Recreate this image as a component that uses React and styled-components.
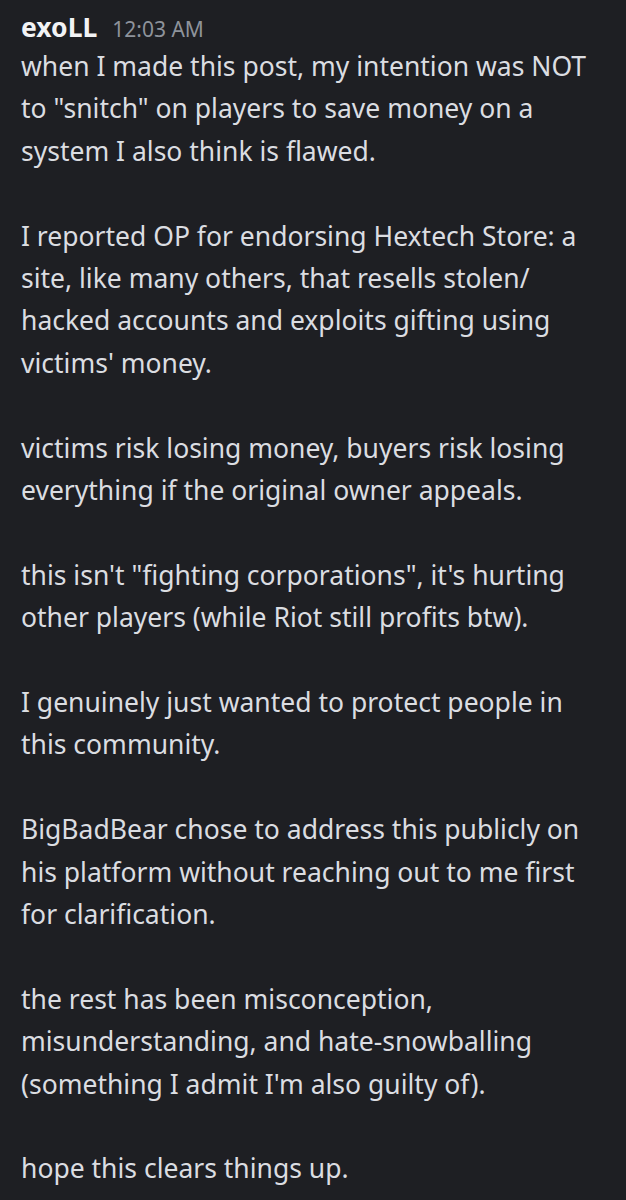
import React from 'react';
import styled, { createGlobalStyle } from 'styled-components';

const GlobalStyle = createGlobalStyle`
  html, body {
    margin: 0;
    padding: 0;
    background: #1e1f23;
  }
`;

const Page = styled.div`
  width: 626px;
  height: 1200px;
  overflow: hidden;
  background: #1e1f23;
  padding: 10px 0 0 21px;
  box-sizing: border-box;
  font-family: "Noto Sans", "Open Sans", sans-serif;
`;

const Header = styled.div`
  display: flex;
  align-items: baseline;
  gap: 15px;
  height: 35px;
  line-height: 35px;
`;

const Username = styled.span`
  color: #f2f3f5;
  font-size: 26.5px;
  font-weight: 700;
`;

const Timestamp = styled.span`
  color: #8e939b;
  font-size: 21px;
`;

const Body = styled.div`
  display: flex;
  flex-direction: column;
  gap: 42.4px;
  color: #dbdde1;
  font-size: 26.5px;
  line-height: 42.4px;
`;

const Paragraph = styled.div`
  display: flex;
  flex-direction: column;
`;

const Line = styled.span`
  white-space: nowrap;
`;

const paragraphs = [
  [
    'when I made this post, my intention was NOT',
    'to "snitch" on players to save money on a',
    'system I also think is flawed.',
  ],
  [
    'I reported OP for endorsing Hextech Store: a',
    'site, like many others, that resells stolen/',
    'hacked accounts and exploits gifting using',
    "victims' money.",
  ],
  [
    'victims risk losing money, buyers risk losing',
    'everything if the original owner appeals.',
  ],
  [
    'this isn\'t "fighting corporations", it\'s hurting',
    'other players (while Riot still profits btw).',
  ],
  [
    'I genuinely just wanted to protect people in',
    'this community.',
  ],
  [
    'BigBadBear chose to address this publicly on',
    'his platform without reaching out to me first',
    'for clarification.',
  ],
  [
    'the rest has been misconception,',
    'misunderstanding, and hate-snowballing',
    "(something I admit I'm also guilty of).",
  ],
  ['hope this clears things up.'],
];

export default function App() {
  return (
    <>
      <GlobalStyle />
      <Page>
        <Header>
          <Username>exoLL</Username>
          <Timestamp>12:03 AM</Timestamp>
        </Header>
        <Body>
          {paragraphs.map((lines, i) => (
            <Paragraph key={i}>
              {lines.map((l, j) => (
                <Line key={j}>{l}</Line>
              ))}
            </Paragraph>
          ))}
        </Body>
      </Page>
    </>
  );
}
